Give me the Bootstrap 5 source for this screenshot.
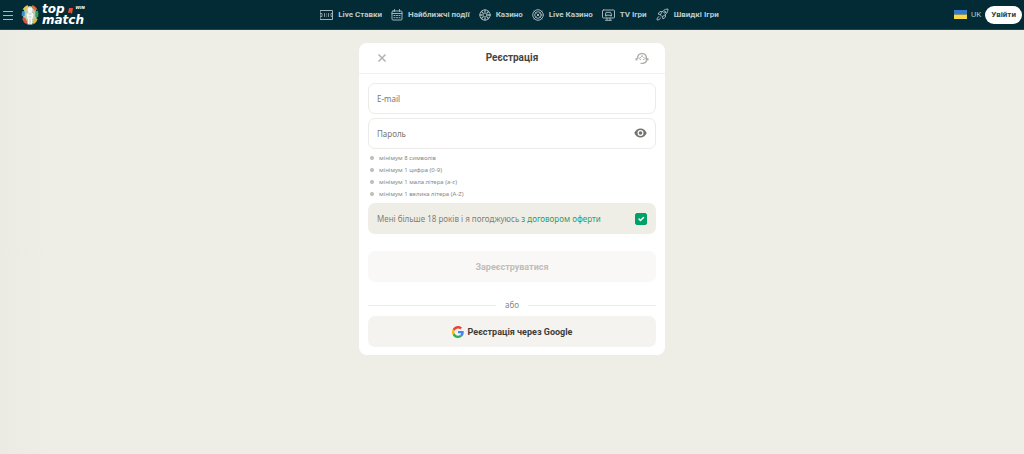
<!DOCTYPE html>
<html lang="uk">
<head>
<meta charset="utf-8">
<meta name="viewport" content="width=device-width, initial-scale=1">
<title>TopMatch — Реєстрація</title>
<link href="https://cdn.jsdelivr.net/npm/bootstrap@5.3.0/dist/css/bootstrap.min.css" rel="stylesheet">
<style>
  body { background: #efeee6 linear-gradient(90deg, #ebeae3, #efeee6 48px); font-family: "Noto Sans", sans-serif; font-size: 8px; line-height: 12px; color: #7f7e77; min-height: 100vh; }
  .topbar { background: #022b36; border-bottom: 1px solid #24434b; min-height: 30px; padding: 0 2px 0 3px; }
  .topbar, .topbar a { color: #bccacd; font-family: Roboto, sans-serif; font-size: 8px; text-decoration: none; }
  .topbar svg { flex: none; }
  .main-menu { gap: 9px; font-weight: 700; }
  .main-menu a { gap: 5px; }
  .line-icon { fill: none; stroke: #a3b4b8; stroke-width: 1; stroke-linecap: round; stroke-linejoin: round; }
  .topbar .brand-name { font: italic 700 12px/11px "DejaVu Sans", sans-serif; color: #fff; }
  .brand-name .brand-tag { font-size: 4px; line-height: 8px; }
  .brand-row { gap: 3px; }
  .login-btn { background: #fff; color: #33403f; border-radius: 10px; font-size: 8px; font-weight: 700; line-height: 12px; padding: 2px 5px; }
  .signup { max-width: 306px; background: #fff; border-radius: 8px; margin-top: 13px; }
  .signup-head { height: 31px; padding: 0 16px; border-bottom: 1px solid #f1f0ec; }
  .signup-head h1 { font-family: Roboto, sans-serif; font-size: 10px; font-weight: 700; color: #45443f; }
  .signup-body { padding: 9px 9px 8px; }
  .icon-btn { border: 0; background: none; padding: 0; display: flex; }
  .field { height: 31px; border: 1px solid #ecebe7; border-radius: 7px; font-size: 8px; padding: 0 8px; color: #66655f; }
  .field::placeholder { color: #77766f; opacity: 1; }
  .field:focus { box-shadow: none; border-color: #00a168; }
  .pass-eye { position: absolute; right: 9px; top: 9px; }
  .rules { font-size: 6px; line-height: 12px; color: #8a8984; margin: 3px 0; }
  .rules li { display: flex; align-items: center; gap: 5px; padding-left: 2px; }
  .rules li::before { content: ""; width: 4px; height: 4px; border-radius: 50%; background: #bdbcb8; }
  .agree { background: #efeee6; border-radius: 7px; height: 31px; padding: 0 9px; margin-bottom: 17px; }
  .agree a { color: #2c9b6d; text-decoration: none; }
  .agree .form-check-input { width: 12px; height: 12px; margin: 0; border-radius: 2px; }
  .agree .form-check-input:checked { background-color: #00a168; border-color: #00a168; }
  .wide-btn { height: 31px; border: 0; border-radius: 7px; font-family: Roboto, sans-serif; font-size: 9px; font-weight: 700; line-height: 12px; padding: 0; background: #f5f3ef; color: #3d3c38; }
  .wide-btn:disabled { background: #faf8f6; color: #bfbdb9; opacity: 1; }
  .split { gap: 9px; margin: 17px 0 5px; color: #8a8984; }
  .split::before, .split::after { content: ""; flex: 1; border-top: 1px solid #eeede9; }
</style>
</head>
<body>
<header class="topbar d-flex align-items-center justify-content-between">
  <div class="d-flex align-items-center">
    <button class="icon-btn me-2" type="button" aria-label="Меню">
      <svg width="10" height="10" viewBox="0 0 10 10" stroke="#a9b8bb" stroke-width="1"><path d="M0 1.500h10M0 5.500h10M0 9.500h10"/></svg>
    </button>
    <a href="#" class="d-flex align-items-center brand-row">
      <svg width="18" height="22" viewBox="0 0 18 22">
        <ellipse cx="9" cy="11" rx="7" ry="9" fill="#b9c9b4"/>
        <g fill="none" stroke-width="3"><path d="M3 6A7 9 0 0 1 7 2.300" stroke="#e8c842"/><path d="M11 2.300A7 9 0 0 1 15 6" stroke="#e56b38"/><path d="M15.500 7A7 9 0 0 1 15.600 13" stroke="#3c9e55"/><path d="M15.300 14.500A7 9 0 0 1 12 19" stroke="#d6bd3a"/><path d="M2.500 7.500A7 9 0 0 0 2.300 12" stroke="#3a8fc2"/><path d="M2.600 14A7 9 0 0 0 6 19" stroke="#dc533f"/></g>
        <path d="M7 3.500h4l.5 3-1 2 2 1.500-.5 4-1 1 .5 5.500H6.500l.5-5.500-1-1-.5-4 2-1.500-1-2z" fill="#f4f8f4"/>
        <path d="M7.500 10h3M7.500 13h3M9 15v5" stroke="#9fb8c0" stroke-width=".7"/>
      </svg>
      <span class="brand-name d-flex flex-column">
        <span class="d-flex brand-row">top
          <svg class="mt-1" width="5" height="6" viewBox="0 0 5 6"><path d="M1 0h4L4 6 2.500 4.500 0 5z" fill="#ef4d2f"/></svg>
          <span class="brand-tag">WIN</span></span>
        <span>match</span>
      </span>
    </a>
  </div>
  <nav class="main-menu d-flex align-items-center">
    <a href="#" class="d-flex align-items-center"><svg class="line-icon" width="13" height="12" viewBox="0 0 13 12"><path d="M.5 1.500h12v9H.5z"/><path stroke-width=".8" d="M.5 4.500h1.500v3H.5M12.500 4.500H11v3h1.500M4.500 4.500v3M8.500 4.500v3M6.500 5v.2M6.500 7v.2"/></svg>Live Ставки</a>
    <a href="#" class="d-flex align-items-center"><svg class="line-icon" width="12" height="12" viewBox="0 0 12 12"><rect x="1" y="2" width="10" height="9" rx="1"/><path d="M1 4.500h10M3.500.5v2M8.500.5v2M3 6.500h1M5.500 6.500h1M8 6.500h1M3 8.700h1M5.500 8.700h1M8 8.700h1"/></svg>Найближчі події</a>
    <a href="#" class="d-flex align-items-center"><svg class="line-icon" width="12" height="12" viewBox="0 0 12 12"><circle cx="6" cy="6" r="5.200"/><circle cx="6" cy="6" r="2"/><path stroke-width="1.300" d="M6 1v2M6 9v2M1 6h2M9 6h2M2.500 2.500l1.200 1.200M8.300 8.300l1.200 1.200M9.500 2.500L8.300 3.700M3.700 8.300L2.500 9.500"/></svg>Казино</a>
    <a href="#" class="d-flex align-items-center"><svg class="line-icon" width="12" height="12" viewBox="0 0 12 12"><circle cx="6" cy="6" r="5.300"/><circle cx="6" cy="6" r="3.300"/><path d="M4.800 4.800l2.400 2.400M7.200 4.800L4.800 7.200M2 2l1.200 1.200M10 2L8.800 3.200M2 10l1.200-1.200M10 10L8.800 8.800"/></svg>Live Казино</a>
    <a href="#" class="d-flex align-items-center"><svg class="line-icon" width="13" height="12" viewBox="0 0 13 12"><rect x=".5" y="1" width="12" height="8" rx="1"/><path d="M3.500 11.300h6M5 9v2M8 9v2M4.500 3.300h4l1 2.200v1.500h-1v-.8h-4V7h-1V5.500z"/></svg>TV Ігри</a>
    <a href="#" class="d-flex align-items-center"><svg class="line-icon" width="13" height="13" viewBox="0 0 13 13"><path d="M4.500 6.500C6 3 8.500 1 12 1c0 3.500-2 6-5.500 7.500zM4.500 6.500L2 6l2-2.500 2 .2M6.500 8.500L7 11l2.500-2-.2-2M3 8.500c-1.500.5-2 2-2 3.500 1.500 0 3-.5 3.500-2"/><circle cx="8.800" cy="4.200" r="1"/></svg>Швидкі Ігри</a>
  </nav>
  <div class="d-flex align-items-center gap-1">
    <a href="#" class="d-flex align-items-center gap-1"><svg width="13" height="9" viewBox="0 0 13 9"><path fill="#3479cd" d="M0 0h13v4.500H0z"/><path fill="#f6d64a" d="M0 4.500h13V9H0z"/></svg>UK</a>
    <button type="button" class="btn login-btn">Увійти</button>
  </div>
</header>

<main class="container-fluid">
  <form class="signup mx-auto">
    <div class="signup-head d-flex align-items-center justify-content-between">
      <button class="icon-btn" type="button" aria-label="Закрити"><svg width="14" height="10" viewBox="0 0 14 10"><path d="M3.500 1.500l7 7M10.500 1.500l-7 7" stroke="#b2b1ad" stroke-width="1.500"/></svg></button>
      <h1 class="m-0">Реєстрація</h1>
      <button class="icon-btn" type="button" aria-label="Підтримка"><svg width="14" height="13" viewBox="0 0 14 13" fill="none" stroke="#b2b1ad"><path d="M2.500 6.500C2.500 3.500 4.500 1.500 7 1.500s4.500 2 4.500 5v1.500c0 2-1.500 3-3.500 3.200" stroke-width="1.500"/><path d="M1.500 6v2.500M12.500 6v2.500" stroke-width="2"/><path d="M3.500 6.500C5.500 6 6.500 5 7 3.500c.7 1.700 2 2.700 4 3"/><path d="M5.300 7v1M8.700 7v1M5.500 11.300h3.200" stroke-width="1.300"/></svg></button>
    </div>
    <div class="signup-body">
      <input type="email" class="form-control field mb-1" placeholder="E-mail" aria-label="E-mail">
      <div class="position-relative">
        <input type="password" class="form-control field" placeholder="Пароль" aria-label="Пароль">
        <button class="icon-btn pass-eye" type="button" aria-label="Показати пароль"><svg width="13" height="12" viewBox="0 0 13 12"><path fill="#74736d" fill-rule="evenodd" d="M6.500 1.500C3.700 1.500 1.300 3.300.3 6c1 2.700 3.400 4.500 6.200 4.500s5.200-1.800 6.200-4.500c-1-2.700-3.400-4.500-6.200-4.500zm0 7.500a3 3 0 1 1 0-6 3 3 0 0 1 0 6z"/><circle cx="6.500" cy="6" r="1.800" fill="#74736d"/></svg></button>
      </div>
      <ul class="rules list-unstyled">
        <li>мінімум 8 символів</li>
        <li>мінімум 1 цифра (0-9)</li>
        <li>мінімум 1 мала літера (a-z)</li>
        <li>мінімум 1 велика літера (A-Z)</li>
      </ul>
      <div class="agree d-flex align-items-center justify-content-between">
        <label for="adult">Мені більше 18 років і я погоджуюсь <a href="#">з договором оферти</a></label>
        <input class="form-check-input" type="checkbox" id="adult" checked>
      </div>
      <button type="submit" class="btn wide-btn w-100" disabled>Зареєструватися</button>
      <div class="split d-flex align-items-center">або</div>
      <button type="button" class="btn wide-btn w-100 d-flex align-items-center justify-content-center gap-1">
        <svg width="12" height="12" viewBox="0 0 48 48"><path fill="#EA4335" d="M24 9.500c3.500 0 6.700 1.200 9.200 3.600l6.900-6.900C35.900 2.400 30.500 0 24 0 14.600 0 6.500 5.400 2.600 13.200l8 6.200C12.400 13.700 17.700 9.500 24 9.500z"/><path fill="#4285F4" d="M47 24.600c0-1.600-.2-3.100-.4-4.600H24v9h12.900c-.6 3-2.200 5.500-4.700 7.200l7.700 6C44.400 38 47 31.800 47 24.600z"/><path fill="#FBBC05" d="M10.500 28.600a14.500 14.500 0 0 1 0-9.200l-8-6.200a24 24 0 0 0 0 21.600z"/><path fill="#34A853" d="M24 48c6.500 0 11.900-2.100 15.900-5.800l-7.700-6c-2.200 1.400-4.900 2.300-8.200 2.300-6.300 0-11.600-4.200-13.500-9.900l-8 6.200C6.500 42.600 14.600 48 24 48z"/></svg>
        Реєстрація через Google
      </button>
    </div>
  </form>
</main>
<script src="https://cdn.jsdelivr.net/npm/bootstrap@5.3.0/dist/js/bootstrap.bundle.min.js"></script>
</body>
</html>
